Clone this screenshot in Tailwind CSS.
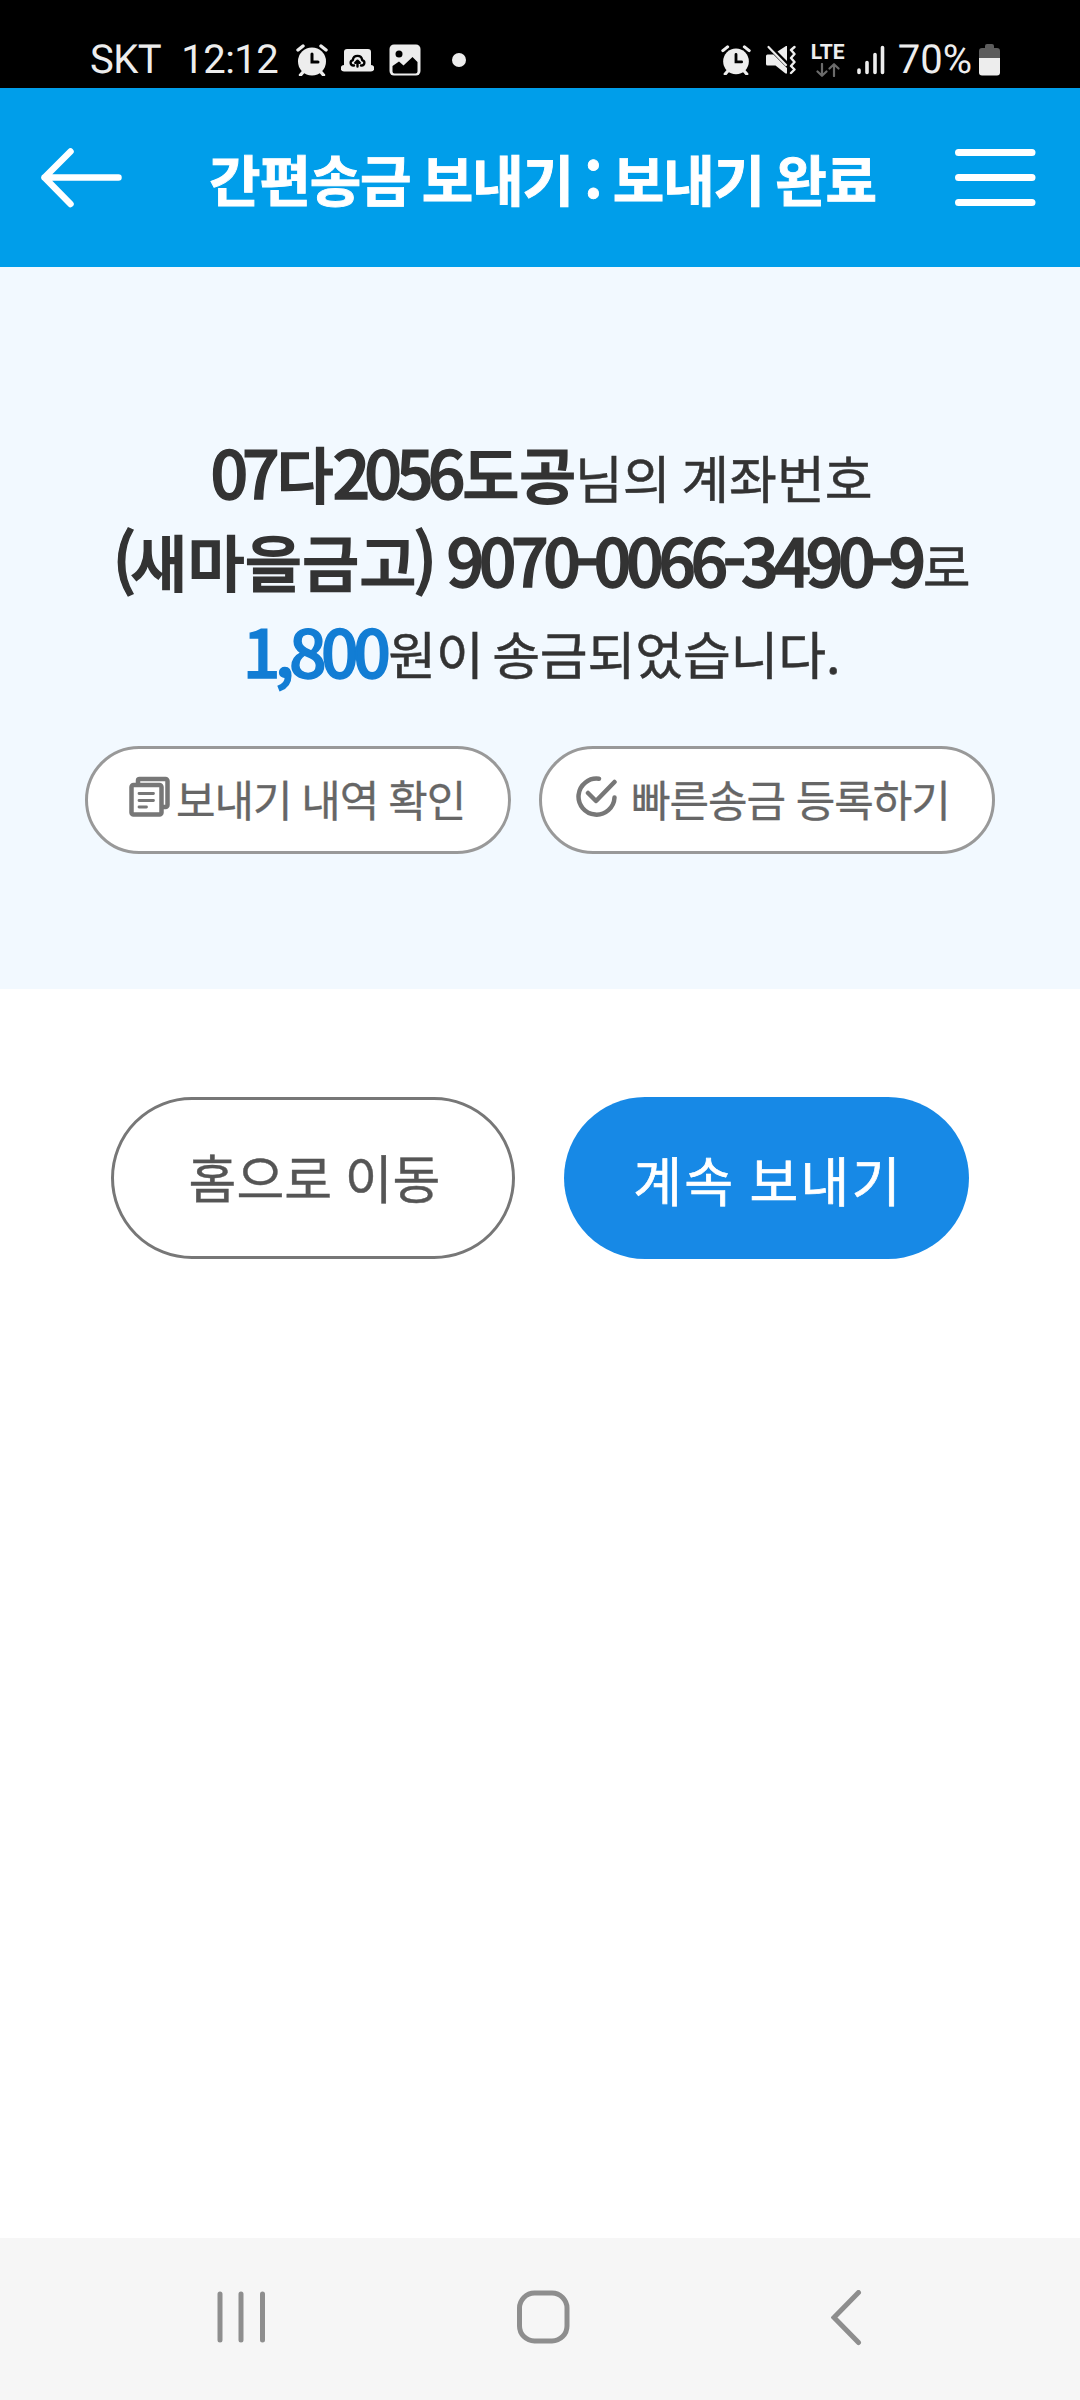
<!DOCTYPE html>
<html lang="ko">
<head>
<meta charset="utf-8">
<meta name="viewport" content="width=device-width, initial-scale=1">
<title>간편송금 보내기</title>
<script src="https://cdn.jsdelivr.net/npm/@tailwindcss/browser@4"></script>
</head>
<body class="flex h-[2400px] w-[1080px] flex-col overflow-hidden bg-white font-['Noto_Sans_CJK_KR','Noto_Sans',sans-serif] [text-rendering:geometricPrecision]">

<!-- Status bar -->
<div class="flex h-[88px] shrink-0 items-start justify-between bg-black pt-[39px] pr-[80px] pl-[90px] font-[Roboto,sans-serif] text-[40px] leading-[42px] text-[#ededed]">
  <div class="flex h-[42px] items-center">
    <span class="tracking-[-0.500px]">SKT</span>
    <span class="ml-[20px] tracking-[-0.500px]">12:12</span>
    <svg class="ml-[18px] h-8 w-8" viewBox="0 0 32 32" fill="none" stroke="#ededed" stroke-linecap="round">
      <circle cx="16" cy="17.500" r="14" fill="#ededed" stroke="none"/>
      <path d="M2 6l5-4M30 6l-5-4M8 27l-3.500 4M24 27l3.500 4" stroke-width="3.400"/>
      <path d="M16 10v8h6" stroke="#000" stroke-width="3"/>
    </svg>
    <svg class="ml-[13px] h-8 w-[33px]" viewBox="0 0 33 32">
      <path fill="#ededed" d="M6 5h21a3 3 0 0 1 3 3v13H3V8a3 3 0 0 1 3-3zM3 21h27a3.200 3.200 0 0 1 0 6.500H3a3.200 3.200 0 0 1 0-6.500z"/>
      <path fill="none" stroke="#000" stroke-width="2.400" stroke-linecap="round" stroke-linejoin="round" d="M13 21.500c-4 .5-4.500-5-1.200-5.300.7-5.800 8.700-5.800 9.400 0 3.300.3 2.800 5.800-1.200 5.300M16.500 22.500v-5.500M14.300 18.800l2.200-2.100 2.200 2.100"/>
    </svg>
    <svg class="ml-[15px] h-8 w-8" viewBox="0 0 32 32">
      <rect x=".5" y=".5" width="31" height="31" rx="4.500" fill="#ededed"/>
      <circle cx="10" cy="10" r="3.500" fill="#000"/>
      <path fill="#000" d="M3.500 22l6.500-4.500 4.500 4 9-8.500 5 5V27.500a2 2 0 0 1-2 2H5.500a2 2 0 0 1-2-2z"/>
    </svg>
    <span class="ml-[31px] h-[14px] w-[14px] rounded-full bg-[#ededed]"></span>
  </div>
  <div class="flex h-[42px] items-center">
    <svg class="h-[30px] w-[30px]" viewBox="0 0 32 32" fill="none" stroke="#ededed" stroke-linecap="round">
      <circle cx="16" cy="17.500" r="13.700" fill="#ededed" stroke="none"/>
      <path d="M2 6l5-4M30 6l-5-4M8 27l-3.500 4M24 27l3.500 4" stroke-width="3.400"/>
      <path d="M16 10v8h6" stroke="#000" stroke-width="3"/>
    </svg>
    <svg class="ml-[15px] h-[30px] w-[30px]" viewBox="0 0 30 30">
      <path fill="#ededed" d="M1.500 9.500h6L21 23v5.500h-1.500L9.500 20.500h-8A1.500 1.500 0 0 1 0 19v-8a1.500 1.500 0 0 1 1.500-1.500zM11.500 6.500L20 1h1v15z"/>
      <path fill="none" stroke="#ededed" stroke-width="2.200" stroke-linecap="round" d="M2.500 2L20 20"/>
      <path fill="none" stroke="#ededed" stroke-width="2.400" stroke-linecap="round" stroke-linejoin="round" d="M28.500 2l-3.500 3 3.500 4-3.500 4 3.500 4-3.500 4 3.500 3.500-3.500 3.500"/>
    </svg>
    <div class="ml-[15px] flex h-[33px] w-[34px] flex-col items-center">
      <span class="text-[21px] leading-[18px] font-bold">LTE</span>
      <svg class="mt-px h-[14px] w-[24px]" viewBox="0 0 24 14" fill="none" stroke="#6b6b6b" stroke-width="2.200" stroke-linecap="round" stroke-linejoin="round"><path d="M6 1v11.500M1.500 8.500L6 12.800l4.500-4.300M18 13V1.500M13.500 5.500L18 1.200l4.500 4.300"/></svg>
    </div>
    <svg class="ml-[12px] h-[30px] w-[28px]" viewBox="0 0 28 30" stroke="#ededed" stroke-width="3.600" stroke-linecap="round"><path d="M2 25v2.500M10 17.500v10M18 9.500v18M25.500 2.500v25"/></svg>
    <span class="ml-[13px]">70%</span>
    <svg class="ml-[7px] h-[32px] w-[21px]" viewBox="0 0 21 32"><path fill="#5c5c5c" d="M6 2a2 2 0 0 1 2-2h5a2 2 0 0 1 2 2v2h3a3 3 0 0 1 3 3v8H0V7a3 3 0 0 1 3-3h3z"/><path fill="#ededed" d="M0 14h21v14.500a3 3 0 0 1-3 3H3a3 3 0 0 1-3-3z"/></svg>
  </div>
</div>

<!-- App header -->
<header class="flex h-[179px] shrink-0 items-center justify-between bg-[#009eea] pr-[43px] pl-[40px] text-white">
  <svg class="h-[62px] w-[82px]" viewBox="0 0 82 62" fill="none" stroke="#fff" stroke-width="6.500" stroke-linecap="round" stroke-linejoin="round"><path d="M30.500 4.500L4.500 30.500l26 26.500M4.500 30.500h74"/></svg>
  <h1 class="ml-2 pt-[2px] text-[56px] leading-[80px] font-bold tracking-[-1.200px] whitespace-nowrap [-webkit-text-stroke:0.900px_#fff] [word-spacing:-3px]">간편송금 보내기 : 보내기 완료</h1>
  <svg class="h-[62px] w-[82px]" viewBox="0 0 82 62" stroke="#fff" stroke-width="7" stroke-linecap="round"><path d="M3.500 5.500h73.500M3.500 30.500h73.500M3.500 55.500h73.500"/></svg>
</header>

<!-- Transfer result -->
<section class="flex h-[722px] shrink-0 flex-col items-center bg-[#f2f9ff] pt-[160px] text-[#333]">
  <div class="flex flex-col items-center text-[66px] leading-[88px] whitespace-nowrap">
    <p class="pl-[3px]"><b class="font-medium tracking-[-5.900px] [-webkit-text-stroke:1.500px_#333]">07<span class="ml-[3px] text-[61.700px] leading-none tracking-normal [-webkit-text-stroke:1.800px_#333]">다</span><span class="-ml-px">2056</span><span class="ml-[3px] text-[61.700px] leading-none tracking-normal [-webkit-text-stroke:1.800px_#333]">도공</span></b><span class="-ml-px text-[52px] leading-none [-webkit-text-stroke:0.500px_#333] [word-spacing:-4px]">님의 계좌번호</span></p>
    <p class="pl-[3px]"><b class="font-medium tracking-[-5.350px] [-webkit-text-stroke:1.500px_#333]">(<span class="text-[61.700px] leading-none tracking-[0.450px] [-webkit-text-stroke:1.800px_#333]">새마을금고</span><span class="-ml-[3px]">)</span><span class="ml-[1.500px]"> 9070-0066-3490-9</span></b><span class="ml-[2px] text-[52px] leading-none [-webkit-text-stroke:0.500px_#333]">로</span></p>
    <p class="pl-[3px]"><b class="align-[-3px] leading-none font-medium tracking-[-5.500px] text-[#127dd4] [-webkit-text-stroke:1.500px_#127dd4]">1,800</b><span class="ml-[3px] text-[52px] leading-none tracking-[-0.150px] [-webkit-text-stroke:0.500px_#333] [word-spacing:-6px]">원이 송금되었습니다.</span></p>
  </div>
  <div class="mt-[55px] flex gap-[28px] text-[43px] leading-[60px] tracking-[-1.100px] whitespace-nowrap text-[#666]">
    <button class="flex h-[108px] w-[426px] items-center rounded-full border-3 border-[#999] bg-white pb-1 pl-[41px]">
      <svg class="-mt-[3px] h-[41px] w-[41px]" viewBox="0 0 41 41" fill="none" stroke="#777" stroke-width="4.500" stroke-linecap="round" stroke-linejoin="round"><path d="M9 7V4.500A1.500 1.500 0 0 1 10.500 3H36.500A2 2 0 0 1 38.500 5V29A2 2 0 0 1 36.500 31H34"/><rect x="2.500" y="9" width="30" height="29.500" rx="2"/><path stroke-width="2.800" d="M10 17.500h14.500M10 24.500h14.500M10 31h7.500"/></svg>
      <span class="ml-[6px] [-webkit-text-stroke:0.300px_#666] [word-spacing:-1px]">보내기 내역 확인</span>
    </button>
    <button class="flex h-[108px] w-[456px] items-center rounded-full border-3 border-[#999] bg-white pb-1 pl-[34px]">
      <svg class="-mt-[3px] h-[41px] w-[41px]" viewBox="0 0 41 41" fill="none" stroke="#777" stroke-width="4.500" stroke-linecap="round" stroke-linejoin="round"><path d="M23 2.800A18 18 0 1 0 38.500 21.500M12 17l8 8L38.500 6"/></svg>
      <span class="ml-[14px] [-webkit-text-stroke:0.300px_#666]">빠른송금 등록하기</span>
    </button>
  </div>
</section>

<!-- Actions -->
<main class="flex grow items-start justify-center gap-[49px] pt-[108px] text-[52px] leading-[80px] whitespace-nowrap">
  <button class="flex h-[162px] w-[404px] items-center justify-center rounded-full border-3 border-[#777] bg-white pb-[3px] pl-[3px] text-[#555]"><span class="[-webkit-text-stroke:0.400px_#555] [word-spacing:-2px]">홈으로 이동</span></button>
  <button class="flex h-[162px] w-[405px] items-center justify-center rounded-full bg-[#1789e6] pt-[2px] pl-[3px] text-white"><span class="text-[53px] tracking-[2.300px] [-webkit-text-stroke:0.700px_#fff] [word-spacing:-3px]">계속 보내기</span></button>
</main>

<!-- System navigation -->
<nav class="flex h-[162px] shrink-0 items-start bg-[#f6f6f6] pt-[52px]">
  <svg class="ml-[217px] h-[54px] w-[49px]" viewBox="0 0 49 54" stroke="#8e8e8e" stroke-width="5" stroke-linecap="round"><path d="M3 4v46M24 4v46M45.500 4v46"/></svg>
  <svg class="ml-[251px] h-[54px] w-[53px]" viewBox="0 0 53 54" fill="none" stroke="#8e8e8e" stroke-width="5"><rect x="2.500" y="3" width="47.500" height="48" rx="15"/></svg>
  <svg class="ml-[261px] h-[56px] w-[31px]" viewBox="0 0 31 56" fill="none" stroke="#8e8e8e" stroke-width="5" stroke-linecap="round"><path d="M27.500 2.500L3 27.500l24.500 25"/></svg>
</nav>
</body>
</html>
